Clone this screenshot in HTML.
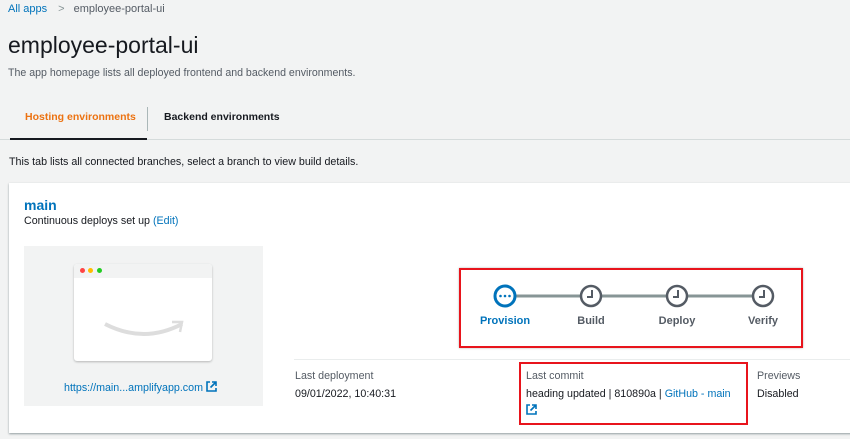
<!DOCTYPE html>
<html><head><style>
*{margin:0;padding:0;box-sizing:border-box}
body{width:850px;height:439px;background:#f2f3f3;font-family:"Liberation Sans",sans-serif;position:relative;overflow:hidden;color:#16191f}
.a{position:absolute;white-space:nowrap}
.blue{color:#0073bb}
.lbl{font-size:10.7px;color:#545b64}
</style></head><body>
<div class="a" style="left:8px;top:3px;font-size:11px"><span class="blue">All apps</span><span style="color:#879596;margin:0 9px 0 11px">&gt;</span><span style="color:#545b64">employee-portal-ui</span></div>
<div class="a" style="left:8px;top:32px;font-size:23px">employee-portal-ui</div>
<div class="a" style="left:8px;top:67px;font-size:10.6px;color:#545b64">The app homepage lists all deployed frontend and backend environments.</div>
<div class="a" style="left:25px;top:111px;font-size:10.5px;font-weight:bold;color:#ec7211">Hosting environments</div>
<div class="a" style="left:147px;top:107px;width:1px;height:24px;background:#aab7b8"></div>
<div class="a" style="left:164px;top:111px;font-size:10.5px;font-weight:bold;color:#16191f">Backend environments</div>
<div class="a" style="left:0;top:139px;width:850px;height:1px;background:#d5dbdb"></div>
<div class="a" style="left:10px;top:138px;width:137px;height:2px;background:#16191f"></div>
<div class="a" style="left:9px;top:156px;font-size:10.7px">This tab lists all connected branches, select a branch to view build details.</div>
<div class="a" style="left:9px;top:183px;width:845px;height:250px;background:#fff;box-shadow:0 1px 2px rgba(0,28,36,.4)"></div>
<div class="a blue" style="left:24px;top:197px;font-size:14px;font-weight:bold">main</div>
<div class="a" style="left:24px;top:215px;font-size:10.7px">Continuous deploys set up <span class="blue">(Edit)</span></div>
<div class="a" style="left:24px;top:246px;width:239px;height:160px;background:#f2f3f3"></div>
<div class="a" style="left:74px;top:264px;width:138px;height:97px;background:#fff;border-radius:3px;box-shadow:0 1px 2px rgba(0,0,0,.25)">
<div style="height:14px;background:#f2f3f3;border-radius:3px 3px 0 0;position:relative">
<span style="position:absolute;left:6px;top:4px;width:5px;height:5px;border-radius:50%;background:#f44"></span>
<span style="position:absolute;left:14px;top:4px;width:5px;height:5px;border-radius:50%;background:#fb0"></span>
<span style="position:absolute;left:23px;top:4px;width:5px;height:5px;border-radius:50%;background:#2c2"></span></div>
<svg width="138" height="83" style="display:block"><path d="M31 46 Q70 66 108 46" stroke="#ddd" stroke-width="4" fill="none"/><path d="M98 44 L108 44 L106 54" stroke="#ddd" stroke-width="2.5" fill="none"/></svg></div>
<div class="a blue" style="left:64px;top:381px;font-size:10.7px">https://main...amplifyapp.com <svg width="11" height="11" viewBox="0 0 11 11" style="vertical-align:-1px"><path d="M4 1H1v9h9V7M6 1h4v4M10 1L4.5 6.5" stroke="#0073bb" stroke-width="1.6" fill="none"/></svg></div>
<div class="a" style="left:459px;top:268px;width:344px;height:80px;border:2px solid #e8141c;box-shadow:0 0 2px rgba(0,0,0,.3)"></div>
<svg class="a" style="left:459px;top:268px" width="344" height="80">
<line x1="56" y1="28" x2="294" y2="28" stroke="#879596" stroke-width="3"/>
<circle cx="46" cy="28" r="10" fill="#fff" stroke="#0073bb" stroke-width="3"/>
<circle cx="41.5" cy="28" r="1.3" fill="#0073bb"/><circle cx="46" cy="28" r="1.3" fill="#0073bb"/><circle cx="50.5" cy="28" r="1.3" fill="#0073bb"/>
<g fill="#fff" stroke="#545b64" stroke-width="2.5"><circle cx="132" cy="28" r="10"/><circle cx="218" cy="28" r="10"/><circle cx="304" cy="28" r="10"/></g>
<g fill="none" stroke="#545b64" stroke-width="2"><path d="M133 22v7h-5"/><path d="M219 22v7h-5"/><path d="M305 22v7h-5"/></g>
<g font-size="11" font-weight="bold" text-anchor="middle" font-family="Liberation Sans"><text x="46" y="56" fill="#0073bb">Provision</text><text x="132" y="56" fill="#545b64">Build</text><text x="218" y="56" fill="#545b64">Deploy</text><text x="304" y="56" fill="#545b64">Verify</text></g></svg>
<div class="a" style="left:294px;top:359px;width:556px;height:1px;background:#eaeded"></div>
<div class="a lbl" style="left:295px;top:370px">Last deployment</div>
<div class="a" style="left:295px;top:388px;font-size:10.7px">09/01/2022, 10:40:31</div>
<div class="a" style="left:519px;top:362px;width:229px;height:63px;border:2px solid #e8141c"></div>
<div class="a lbl" style="left:526px;top:370px">Last commit</div>
<div class="a" style="left:526px;top:388px;font-size:10.7px">heading updated | 810890a | <span class="blue">GitHub - main</span></div>
<svg class="a" style="left:526px;top:404px" width="11" height="11" viewBox="0 0 11 11"><path d="M4 1H1v9h9V7M6 1h4v4M10 1L4.5 6.5" stroke="#0073bb" stroke-width="1.6" fill="none"/></svg>
<div class="a lbl" style="left:757px;top:370px">Previews</div>
<div class="a" style="left:757px;top:388px;font-size:10.7px">Disabled</div>
</body></html>
